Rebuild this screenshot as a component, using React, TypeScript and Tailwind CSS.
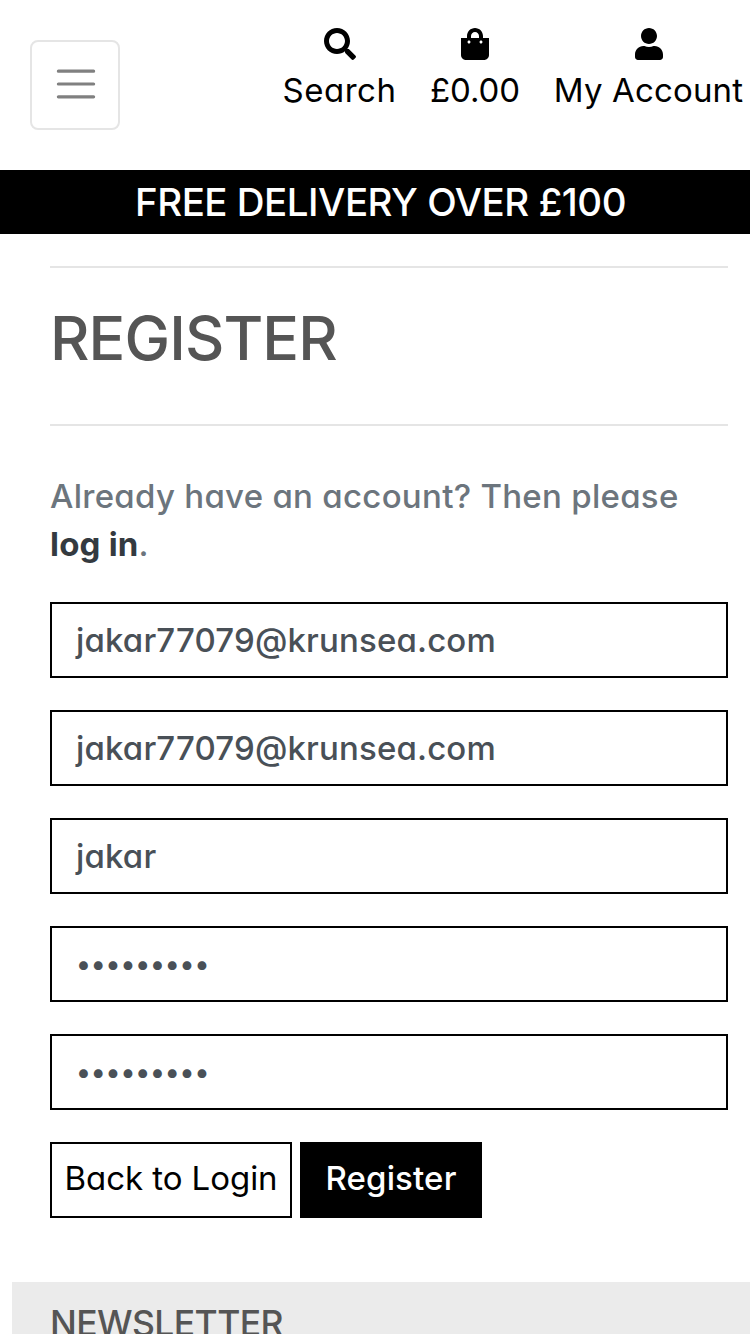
import type { ReactNode } from "react";
import { FaSearch, FaShoppingBag, FaUser } from "react-icons/fa";

function NavItem({ icon, label, className }: { icon: ReactNode; label: string; className: string }) {
  return (
    <a href="#" className={`flex flex-col items-center gap-1.5 whitespace-nowrap text-[33px] leading-[48px] text-black ${className}`}>
      {icon}
      <span>{label}</span>
    </a>
  );
}

function Field({ value }: { value: string }) {
  return (
    <div className="flex h-[76px] items-center border-2 border-black bg-white pl-6 text-[33px] leading-[48px] font-medium tracking-[0.15px] text-[#495057]">
      {value}
    </div>
  );
}

function PasswordField() {
  return (
    <div className="flex h-[76px] items-center border-2 border-black bg-white pl-6 text-[28px] leading-[48px] font-medium tracking-[-0.13px] text-[#495057]">
      •••••••••
    </div>
  );
}

export default function App() {
  return (
    <div className="h-[1334px] w-[750px] overflow-hidden bg-white font-[Inter,'Open_Sans',sans-serif] [font-feature-settings:'cv11']">
      <header className="flex h-[170px] items-start">
        <button className="mt-10 ml-[30px] flex h-[90px] w-[90px] items-start rounded-lg border-2 border-[#e5e5e5] pt-[18px] pl-5">
          <svg width="48" height="48" viewBox="0 0 30 30" className="block">
            <path d="M4 7h22M4 15h22M4 23h22" stroke="#808080" strokeWidth="2" strokeLinecap="round" fill="none" />
          </svg>
        </button>
        <nav className="ml-[162px] flex pt-7">
          <NavItem icon={<FaSearch size={32} />} label="Search" className="w-[115px] tracking-[0.5px]" />
          <NavItem icon={<FaShoppingBag size={32} />} label="£0.00" className="ml-[33px] w-[90px] tracking-[-0.1px]" />
          <NavItem icon={<FaUser size={32} />} label="My Account" className="ml-[32px] w-[193px] tracking-[0.15px]" />
        </nav>
      </header>

      <div className="flex h-16 items-center bg-black pl-[135px] text-[38.5px] leading-[64px] font-medium tracking-[-0.5px] whitespace-nowrap text-white">
        FREE DELIVERY OVER £100
      </div>

      <main className="mr-[22px] ml-[50px] pt-8">
        <hr className="border-0 border-t-2 border-[#e5e5e5]" />
        <h1 className="mt-8 text-[61px] leading-[76px] font-medium tracking-[-0.9px] text-[#555]">REGISTER</h1>
        <hr className="mt-12 border-0 border-t-2 border-[#e5e5e5]" />
        <p className="mt-[46px] text-[33px] leading-[48px] font-medium tracking-[0.28px] whitespace-nowrap text-[#6c757d]">
          Already have an account? Then please
          <br />
          <a href="#" className="font-bold tracking-[0.2px] text-[#343a40]">log in</a>.
        </p>
        <form className="mt-[34px] flex flex-col gap-8">
          <Field value="jakar77079@krunsea.com" />
          <Field value="jakar77079@krunsea.com" />
          <Field value="jakar" />
          <PasswordField />
          <PasswordField />
          <div className="flex gap-2 text-[33px] leading-[48px] whitespace-nowrap">
            <a href="#" className="flex h-[76px] w-[242px] items-center justify-center border-2 border-black pb-1 tracking-[-0.05px] text-black">Back to Login</a>
            <button type="button" className="flex h-[76px] w-[182px] items-center justify-center bg-black pb-1 font-medium tracking-[0.15px] text-white">Register</button>
          </div>
        </form>
      </main>

      <footer className="mt-16 ml-3 h-[52px] overflow-hidden bg-[#ebebeb] pt-5 pl-[38px]">
        <h2 className="text-[35.5px] leading-[44px] font-medium tracking-[-0.6px] text-[#555]">NEWSLETTER</h2>
      </footer>
    </div>
  );
}
